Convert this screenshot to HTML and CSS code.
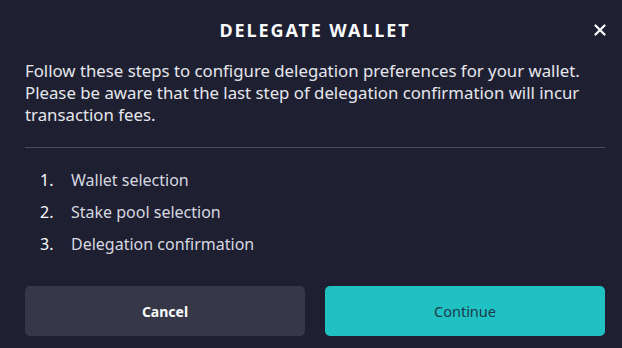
FILE: index.html
```html
<!DOCTYPE html>
<html>
<head>
<meta charset="utf-8">
<link rel="stylesheet" href="styles.css">
</head>
<body>
<div class="dialog">
  <header class="header">
    <h1 class="title">DELEGATE WALLET</h1>
    <button class="close" aria-label="Close">
      <svg width="12" height="12" viewBox="0 0 12 12"><path d="M1.5 1.5L10.5 10.5M10.5 1.5L1.5 10.5" stroke="#fff" stroke-width="2.2" stroke-linecap="round"/></svg>
    </button>
  </header>
  <p class="intro">Follow these steps to configure delegation preferences for your wallet. Please be aware that the last step of delegation confirmation will incur transaction fees.</p>
  <hr class="divider">
  <ol class="steps">
    <li><span class="num">1.</span><span>Wallet selection</span></li>
    <li><span class="num">2.</span><span>Stake pool selection</span></li>
    <li><span class="num">3.</span><span>Delegation confirmation</span></li>
  </ol>
  <div class="actions">
    <button class="btn cancel">Cancel</button>
    <button class="btn continue">Continue</button>
  </div>
</div>
</body>
</html>
```
FILE: styles.css
```css
html, body {
  margin: 0;
  padding: 0;
  background: #1e1f31;
}
body {
  width: 622px;
  height: 348px;
  overflow: hidden;
  font-family: "Noto Sans", sans-serif;
}
.dialog {
  padding: 0 17px 0 25px;
}
.header {
  position: relative;
  height: 60px;
  display: flex;
  align-items: center;
  justify-content: center;
  width: 580px;
}
.title {
  margin: 0;
  font-size: 18px;
  font-weight: 700;
  letter-spacing: 1.9px;
  color: #fafbfc;
}
.close {
  position: absolute;
  right: -1px;
  top: 24px;
  background: none;
  border: 0;
  padding: 0;
  width: 12px;
  height: 12px;
  display: flex;
}
.intro {
  margin: 0;
  font-size: 16.8px;
  line-height: 22px;
  color: #e6e7ec;
  width: 580px;
}
.divider {
  margin: 21px 0 0;
  width: 580px;
  border: 0;
  border-top: 1px solid #4a4b5e;
}
.steps {
  list-style: none;
  margin: 0;
  padding: 21px 0 0 15px;
  display: flex;
  flex-direction: column;
  gap: 10px;
}
.steps li {
  display: flex;
  font-size: 16px;
  line-height: 22px;
  color: #d7d8e0;
}
.num {
  width: 31px;
  color: #fafbfc;
}
.actions {
  display: flex;
  gap: 20px;
  margin-top: 31px;
  width: 580px;
}
.btn {
  flex: 1;
  height: 50px;
  border: 0;
  border-radius: 5px;
  font-family: "Noto Sans", sans-serif;
  font-size: 14px;
}
.cancel {
  background: #373847;
  color: #fafbfc;
  font-weight: 700;
}
.continue {
  background: #1fc1c3;
  color: #1e3a4a;
  font-weight: 400;
  font-size: 14.5px;
}
```
